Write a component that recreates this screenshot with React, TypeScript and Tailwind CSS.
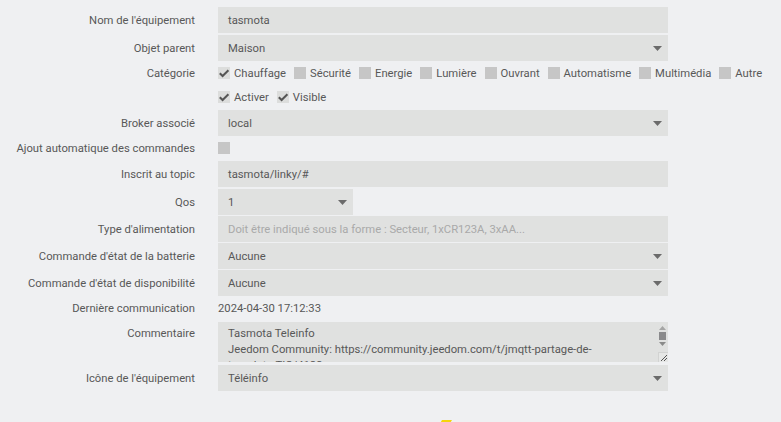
import type { ReactNode } from 'react'

const categories = [
  { name: 'Chauffage', checked: true },
  { name: 'Sécurité', checked: false },
  { name: 'Energie', checked: false },
  { name: 'Lumière', checked: false },
  { name: 'Ouvrant', checked: false },
  { name: 'Automatisme', checked: false },
  { name: 'Multimédia', checked: false },
  { name: 'Autre', checked: false },
]

function Caret() {
  return (
    <svg width="9" height="5" viewBox="0 0 9 5" className="shrink-0">
      <polygon points="0,0 9,0 4.5,5" fill="#6b6b6b" />
    </svg>
  )
}

function Box({ checked }: { checked: boolean }) {
  return (
    <span
      className={
        'inline-flex h-[12px] w-[12px] shrink-0 items-center justify-center ' +
        (checked ? 'bg-[#dcdddc]' : 'bg-[#c6c6c6]')
      }
    >
      {checked && (
        <svg width="12" height="12" viewBox="0 0 12 12">
          <polyline points="1.8,6.2 4.6,9 10.4,3.2" fill="none" stroke="#555" strokeWidth="2" />
        </svg>
      )}
    </span>
  )
}

function Check({ label, checked }: { label: string; checked: boolean }) {
  return (
    <label className="mr-[8px] flex items-center gap-[4px]">
      <Box checked={checked} />
      <span className="pt-[1px]">{label}</span>
    </label>
  )
}

function Row({
  label,
  children,
  className = '',
  top = false,
}: {
  label: string
  children?: ReactNode
  className?: string
  top?: boolean
}) {
  return (
    <div className={'flex ' + (top ? 'items-start ' : 'items-center ') + className}>
      <div className={'w-[195px] shrink-0 text-right ' + (top ? 'pt-[5px]' : 'pt-[1px]')}>{label}</div>
      <div className="ml-[23px] flex w-[450px] items-center">{children}</div>
    </div>
  )
}

function Field({ value, placeholder }: { value?: string; placeholder?: string }) {
  return (
    <div className="flex h-[26px] w-full items-center bg-[#e0e1e0] px-[10px]">
      {value ? (
        <span className="pt-[1px]">{value}</span>
      ) : (
        <span className="pt-[1px] text-[#a9a9a9]">{placeholder}</span>
      )}
    </div>
  )
}

function Select({ value, width = 'w-full' }: { value: string; width?: string }) {
  return (
    <div className={'flex h-[26px] items-center justify-between bg-[#e0e1e0] pl-[10px] pr-[6px] ' + width}>
      <span className="pt-[1px]">{value}</span>
      <Caret />
    </div>
  )
}

export default function App() {
  return (
    <div
      className="min-h-screen bg-[#eff0f2] pt-[7px] text-[11.25px] leading-[14px] text-[#585858]"
      style={{ fontFamily: 'Roboto, "Liberation Sans", sans-serif' }}
    >
      <Row label="Nom de l'équipement" className="h-[26px]">
        <Field value="tasmota" />
      </Row>
      <Row label="Objet parent" className="mt-[2px] h-[26px]">
        <Select value="Maison" />
      </Row>
      <Row label="Catégorie" className="mt-[1px] h-[22px]">
        <div className="flex items-center">
          {categories.map((c) => (
            <Check key={c.name} label={c.name} checked={c.checked} />
          ))}
        </div>
      </Row>
      <Row label="" className="mt-[2px] h-[22px]">
        <div className="flex items-center">
          <Check label="Activer" checked />
          <Check label="Visible" checked />
        </div>
      </Row>
      <Row label="Broker associé" className="mt-[2px] h-[26px]">
        <Select value="local" />
      </Row>
      <Row label="Ajout automatique des commandes" className="mt-[1px] h-[22px]">
        <Box checked={false} />
      </Row>
      <Row label="Inscrit au topic" className="mt-[2px] h-[26px]">
        <Field value="tasmota/linky/#" />
      </Row>
      <Row label="Qos" className="mt-[2px] h-[26px]">
        <Select value="1" width="w-[135px]" />
      </Row>
      <Row label="Type d'alimentation" className="mt-[1px] h-[26px]">
        <Field placeholder="Doit être indiqué sous la forme : Secteur, 1xCR123A, 3xAA..." />
      </Row>
      <Row label="Commande d'état de la batterie" className="mt-[1px] h-[26px]">
        <Select value="Aucune" />
      </Row>
      <Row label="Commande d'état de disponibilité" className="mt-[1px] h-[26px]">
        <Select value="Aucune" />
      </Row>
      <Row label="Dernière communication" className="mt-[1px] h-[22px]">
        <span className="pt-[1px]">2024-04-30 17:12:33</span>
      </Row>
      <Row label="Commentaire" className="mt-[3px]" top>
        <div className="relative h-[40px] w-full overflow-hidden bg-[#e0e1e0]">
          <textarea
            readOnly
            className="block h-full w-full resize-none overflow-hidden bg-transparent pl-[10px] pr-[40px] pt-[4px] text-[11.25px] leading-[16px] text-[#585858] outline-none"
            defaultValue={
              'Tasmota Teleinfo\nJeedom Community: https://community.jeedom.com/t/jmqtt-partage-de-template-TIC/4123'
            }
          />
          <div className="absolute right-[1px] top-[4px] flex w-[9px] flex-col items-center">
            <svg width="7" height="4" viewBox="0 0 7 4">
              <polygon points="0,4 7,4 3.5,0" fill="#a5a5a5" />
            </svg>
            <div className="mt-[2px] h-[8px] w-[7px] bg-[#8a8a8c]" />
            <svg width="7" height="4" viewBox="0 0 7 4" className="mt-[2px]">
              <polygon points="0,0 7,0 3.5,4" fill="#8a8a8a" />
            </svg>
          </div>
          <div className="absolute bottom-0 right-0 h-[10px] w-[10px] border-l border-t border-[#d2d3d2] bg-[#e6e7e6]">
            <svg width="9" height="9" viewBox="0 0 9 9">
              <line x1="2" y1="8" x2="8" y2="2" stroke="#555" strokeWidth="1" />
              <line x1="5" y1="8" x2="8" y2="5" stroke="#555" strokeWidth="1" />
            </svg>
          </div>
        </div>
      </Row>
      <Row label="Icône de l'équipement" className="mt-[3px] h-[26px]">
        <Select value="Téléinfo" />
      </Row>
      <div className="ml-[218px] flex w-[450px] justify-center pt-[29px]">
        <svg width="30" height="36" viewBox="0 0 30 36">
          <polygon points="14,0 24,0 16,13 23,13 6,36 11,17 4,17" fill="#f5d50a" />
        </svg>
      </div>
    </div>
  )
}
